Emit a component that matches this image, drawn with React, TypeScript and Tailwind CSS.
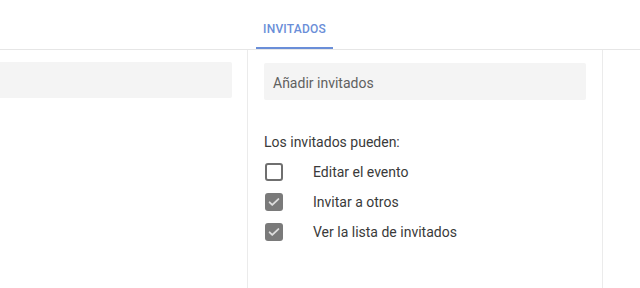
import React from 'react'

const permissions = [
  { label: 'Editar el evento', checked: false },
  { label: 'Invitar a otros', checked: true },
  { label: 'Ver la lista de invitados', checked: true },
]

const Checkbox = ({ checked }: { checked: boolean }) => {
  if (!checked) {
    return <div className="w-[18px] h-[18px] rounded-[3px] border-2 border-[#6f6f6f] bg-white" />
  }
  return (
    <div className="w-[18px] h-[18px] rounded-[3px] bg-[#7a7a7a] flex items-center justify-center">
      <svg width="14" height="14" viewBox="0 0 24 24" fill="none">
        <path d="M4.5 12.5l4.5 4.5L19.5 7" stroke="#dcdcdc" strokeWidth="3.2" strokeLinecap="round" strokeLinejoin="round" />
      </svg>
    </div>
  )
}

export default function App() {
  return (
    <div className="w-[640px] h-[288px] bg-white overflow-hidden font-['Roboto',sans-serif] text-[#3c4043]">
      {/* Tabs */}
      <div className="h-[50px] flex border-b border-[#e6e6e6]">
        <div className="w-[256px]" />
        <div className="w-[77px] flex items-center justify-center border-b-2 border-[#6a8ed8]">
          <span className="text-[12px] font-medium tracking-[0.2px] text-[#6a8ed8] pt-[10px]">INVITADOS</span>
        </div>
      </div>

      <div className="flex h-[238px]">
        {/* Left column */}
        <div className="w-[247px] pt-[12px] pr-[15px]">
          <div className="h-[36px] bg-[#f4f4f4] rounded-r-[2px]" />
        </div>

        {/* Guests column */}
        <div className="w-[356px] border-l border-r border-[#ebebeb] px-[16px] pt-[13px]">
          <div className="h-[37px] bg-[#f4f4f4] rounded-[2px] flex items-center px-[9px] pt-[3px]">
            <span className="text-[14px] text-[#606060]">Añadir invitados</span>
          </div>

          <div className="mt-[34px] text-[14px] text-[#3a3a3a] leading-[16px]">Los invitados pueden:</div>

          <div className="mt-[13px] flex flex-col gap-[12px]">
            {permissions.map(p => (
              <div key={p.label} className="flex items-center h-[18px]">
                <div className="w-[49px] pl-[1px]">
                  <Checkbox checked={p.checked} />
                </div>
                <span className="text-[14px] text-[#3a3a3a] pt-[1px]">{p.label}</span>
              </div>
            ))}
          </div>
        </div>

        <div className="flex-1" />
      </div>
    </div>
  )
}
